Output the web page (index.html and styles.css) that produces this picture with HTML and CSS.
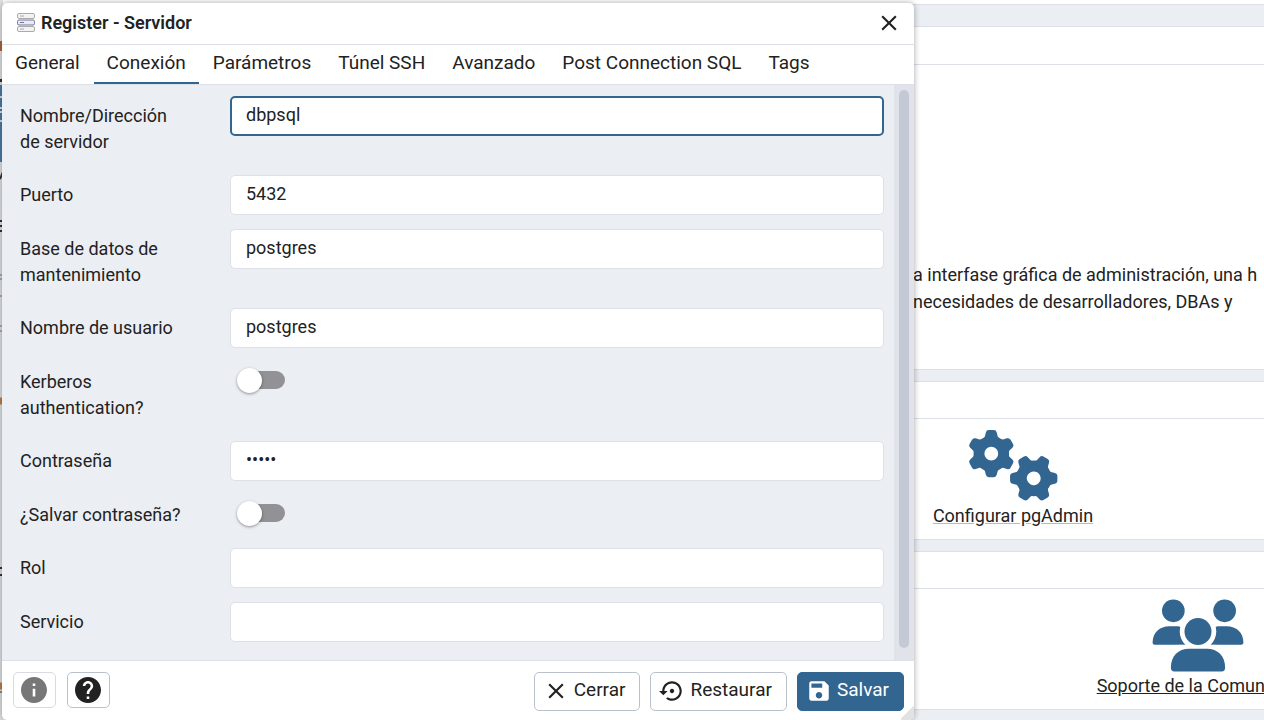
FILE: index.html
```html
<!DOCTYPE html>
<html lang="es">
<head>
<meta charset="utf-8">
<title>pgAdmin - Register Servidor</title>
<link rel="stylesheet" href="styles.css">
</head>
<body>
<main class="dashboard">
  <section class="panel panel-welcome">
    <div class="panel-head"></div>
    <div class="panel-body">
      <p class="intro">a interfase gráfica de administración, una h<br>necesidades de desarrolladores, DBAs y</p>
    </div>
  </section>
  <section class="panel">
    <div class="panel-head"></div>
    <div class="panel-body link-area link-area-config">
      <a class="quick-link quick-link-soft" href="#">
        <svg class="quick-icon" viewBox="0 0 92 74" aria-hidden="true">
          <defs>
            <path id="tooth" d="M-9.500-13-6.500-17.500-5.500-21.500Q-5-24-2.500-24H2.500Q5-24 5.500-21.500L6.500-17.500 9.500-13Z"/>
            <g id="gear">
              <circle r="12.500" fill="none" stroke="currentColor" stroke-width="11"/>
              <use href="#tooth"/><use href="#tooth" transform="rotate(60)"/><use href="#tooth" transform="rotate(120)"/>
              <use href="#tooth" transform="rotate(180)"/><use href="#tooth" transform="rotate(240)"/><use href="#tooth" transform="rotate(300)"/>
            </g>
          </defs>
          <use href="#gear" transform="translate(24 25)"/>
          <use href="#gear" transform="translate(67 50) rotate(30)"/>
        </svg>
        <span>Configurar pgAdmin</span>
      </a>
    </div>
  </section>
  <section class="panel">
    <div class="panel-head"></div>
    <div class="panel-body link-area link-area-community">
      <a class="quick-link" href="#">
        <svg class="quick-icon" viewBox="0 0 92 74" aria-hidden="true">
          <circle cx="21" cy="12" r="11.500"/><circle cx="73" cy="12" r="11.500"/>
          <path d="M0 44C0 34 7 27.500 17 27.500H26Q40 31 40 46.500H3Q0 46.500 0 44Z"/>
          <path d="M92 44C92 34 85 27.500 75 27.500H66Q52 31 52 46.500H89Q92 46.500 92 44Z"/>
          <circle cx="46" cy="33" r="18.500" fill="#fff"/>
          <rect x="27" y="46.500" width="38" height="5" fill="#fff"/>
          <circle cx="46" cy="33" r="13.700"/>
          <path d="M18.500 69.500C18.500 58 26 50.500 37 50.500H55C66 50.500 73.500 58 73.500 69.500Q73.500 73.500 70 73.500H22Q18.500 73.500 18.500 69.500Z"/>
        </svg>
        <span>Soporte de la Comunidad</span>
      </a>
    </div>
  </section>
  <svg class="edge" viewBox="0 0 3 720" aria-hidden="true">
    <rect y="0" width="3" height="720" fill="#e0e1e3"/>
    <rect y="41" width="3" height="10" fill="#a8673b"/>
    <rect y="79" width="3" height="3" fill="#333"/>
    <rect y="85" width="3" height="77" fill="#4d7ca5"/>
    <path d="M0 97h3M0 108h3M0 112h3M0 121h3" stroke="#d8dfe8" stroke-width="2"/>
    <path d="M0 179L3 172M0 221h3M0 226h3M0 231h3M0 568h3M0 575h3" stroke="#333" stroke-width="2"/>
    <path d="M0 275h3M0 279h3M0 296h3M0 326h3M0 331h3" stroke="#777"/>
    <path d="M0 401h3M0 686h3" stroke="#b88349" stroke-width="7"/>
    <path d="M0 692h3" stroke="#333"/>
  </svg>
</main>

<div class="dialog" role="dialog" aria-labelledby="dialog-title">
  <header class="dialog-head">
    <svg class="server-icon" viewBox="0 0 18 20" aria-hidden="true">
      <g fill="#f3f3f3" stroke="#aaa"><rect x=".5" y=".5" width="17" height="5" rx="1.500"/><rect x=".5" y="13.500" width="17" height="5" rx="1.500"/></g>
      <rect x=".5" y="7" width="17" height="5" rx="1.500" fill="#e9eaf3" stroke="#73779a"/>
      <path d="M3 3h4M3 16h4" stroke="#aaa"/><path d="M3 9.500h4" stroke="#73779a"/>
    </svg>
    <h1 class="dialog-title" id="dialog-title">Register - Servidor</h1>
    <button class="close" type="button" aria-label="Cerrar ventana">
      <svg class="icon" viewBox="0 0 24 24"><path d="M19 6.410 17.590 5 12 10.590 6.410 5 5 6.410 10.590 12 5 17.590 6.410 19 12 13.410 17.590 19 19 17.590 13.410 12z"/></svg>
    </button>
  </header>
  <div class="tabs" role="tablist">
    <button class="tab" role="tab" type="button">General</button>
    <button class="tab tab-active" role="tab" type="button" aria-selected="true">Conexión</button>
    <button class="tab" role="tab" type="button">Parámetros</button>
    <button class="tab" role="tab" type="button">Túnel SSH</button>
    <button class="tab" role="tab" type="button">Avanzado</button>
    <button class="tab" role="tab" type="button">Post Connection SQL</button>
    <button class="tab" role="tab" type="button">Tags</button>
  </div>
  <div class="dialog-body">
    <form class="form" id="server-form">
      <div class="row"><label class="label" for="host">Nombre/Dirección de servidor</label><input class="field field-focus" id="host" type="text" value="dbpsql"></div>
      <div class="row"><label class="label" for="port">Puerto</label><input class="field" id="port" type="text" value="5432"></div>
      <div class="row"><label class="label" for="db">Base de datos de mantenimiento</label><input class="field" id="db" type="text" value="postgres"></div>
      <div class="row"><label class="label" for="user">Nombre de usuario</label><input class="field" id="user" type="text" value="postgres"></div>
      <div class="row"><label class="label" for="kerberos">Kerberos authentication?</label><input class="switch" id="kerberos" type="checkbox" role="switch"></div>
      <div class="row"><label class="label" for="pass">Contraseña</label><input class="field" id="pass" type="password" value="admin"></div>
      <div class="row"><label class="label" for="save-pass">¿Salvar contraseña?</label><input class="switch" id="save-pass" type="checkbox" role="switch"></div>
      <div class="row"><label class="label" for="role">Rol</label><input class="field" id="role" type="text"></div>
      <div class="row"><label class="label" for="service">Servicio</label><input class="field" id="service" type="text"></div>
    </form>
    <div class="scroll-track"><div class="scroll-thumb"></div></div>
  </div>
  <footer class="dialog-foot">
    <button class="btn btn-icon" type="button" disabled aria-label="Información">
      <svg class="icon" viewBox="2 2 20 20"><path d="M12 2C6.480 2 2 6.480 2 12s4.480 10 10 10 10-4.480 10-10S17.520 2 12 2zm1 15h-2v-6h2v6zm0-8h-2V7h2v2z"/></svg>
    </button>
    <button class="btn btn-icon" type="button" aria-label="Ayuda">
      <svg class="icon" viewBox="2 2 20 20"><path d="M12 2C6.480 2 2 6.480 2 12s4.480 10 10 10 10-4.480 10-10S17.520 2 12 2zm1 17h-2v-2h2v2zm2.070-7.750-.9.920C13.450 12.900 13 13.500 13 15h-2v-.5c0-1.100.45-2.100 1.170-2.830l1.240-1.260c.37-.36.59-.86.59-1.410 0-1.100-.9-2-2-2s-2 .9-2 2H8c0-2.210 1.790-4 4-4s4 1.790 4 4c0 .88-.36 1.680-.93 2.250z"/></svg>
    </button>
    <div class="actions">
      <button class="btn btn-text" type="button">
        <svg class="icon" viewBox="0 0 24 24"><path d="M19 6.410 17.590 5 12 10.590 6.410 5 5 6.410 10.590 12 5 17.590 6.410 19 12 13.410 17.590 19 19 17.590 13.410 12z"/></svg><span class="btn-label">Cerrar</span>
      </button>
      <button class="btn btn-text" type="button">
        <svg class="icon" viewBox="0 0 24 24"><path d="M14 12c0-1.100-.9-2-2-2s-2 .9-2 2 .9 2 2 2 2-.9 2-2zm-2-9c-4.970 0-9 4.030-9 9H0l4 4 4-4H5c0-3.870 3.130-7 7-7s7 3.130 7 7-3.130 7-7 7c-1.510 0-2.910-.49-4.060-1.300l-1.420 1.440C8.040 20.300 9.940 21 12 21c4.970 0 9-4.030 9-9s-4.030-9-9-9z"/></svg><span class="btn-label">Restaurar</span>
      </button>
      <button class="btn btn-text btn-primary" type="submit" form="server-form">
        <svg class="icon" viewBox="0 0 24 24"><path d="M17 3H5c-1.110 0-2 .9-2 2v14c0 1.100.89 2 2 2h14c1.100 0 2-.9 2-2V7l-4-4zm-5 16c-1.660 0-3-1.340-3-3s1.340-3 3-3 3 1.340 3 3-1.340 3-3 3zm3-10H5V5h10v4z"/></svg><span class="btn-label">Salvar</span>
      </button>
    </div>
  </footer>
  <span class="resize-grip"></span>
</div>
</body>
</html>
```
FILE: styles.css
```css
* { box-sizing: border-box; }

:root {
  --text: #222;
  --line: #dde0e6;
  --bg: #ebeef3;
  --primary: #326690;
}

body {
  margin: 0;
  height: 100vh;
  overflow: hidden;
  position: relative;
  background: #fff;
  color: var(--text);
  font: 18px/27px Roboto, sans-serif;
}

button, input { font: inherit; color: inherit; }

/* Dashboard behind the dialog */
.dashboard {
  display: flex;
  flex-direction: column;
  gap: 11px;
  min-height: calc(100vh - 4px);
  margin-top: 4px;
  padding: 21px 0 11px;
  background: var(--bg);
  border-top: 1px solid var(--line);
  overflow: hidden;
}

.panel {
  background: #fff;
  border: 1px solid var(--line);
  border-width: 1px 0;
}

.panel-head { height: 37px; border-bottom: 1px solid var(--line); }

.panel-body { min-height: 120px; }

.panel-welcome .panel-head { height: 38px; }
.panel-welcome .panel-body { min-height: 304px; padding-top: 196px; }
.intro { margin: 0 0 0 913px; white-space: nowrap; }

.link-area { display: flex; padding-top: 10px; }
.link-area-config { padding-left: 903px; }
.link-area-community { padding-left: 1088px; }

.quick-link {
  flex: none;
  min-width: 220px;
  display: flex;
  flex-direction: column;
  align-items: center;
  color: var(--text);
  white-space: nowrap;
}

.quick-link-soft { text-decoration-color: #a9bfd0; }
.quick-icon { width: 92px; height: 73px; fill: var(--primary); color: var(--primary); }

.edge { position: absolute; left: 0; top: 0; width: 3px; height: 720px; }

/* Dialog */
.dialog {
  position: absolute;
  inset: 3px 350px 0 2px;
  display: flex;
  flex-direction: column;
  background: #fff;
  border-radius: 5px;
  box-shadow: 0 0 6px rgba(0, 0, 0, .35);
  overflow: hidden;
}

.dialog-head {
  display: flex;
  align-items: center;
  gap: 6px;
  height: 42px;
  padding: 0 12px 2px 15px;
  border-bottom: 1px solid var(--line);
}

.server-icon { width: 18px; height: 20px; }
.dialog-title { flex: 1; margin: 0; font-size: 18px; font-weight: 600; }
.close { display: flex; padding: 0; border: 0; background: none; }
.icon { width: 26px; height: 26px; fill: currentColor; flex: none; }

.tabs {
  display: flex;
  gap: 1px;
  height: 40px;
  border-bottom: 1px solid var(--line);
}

.tab {
  padding: 0 13px 2px;
  border: 0;
  border-bottom: 2px solid transparent;
  background: none;
  font-size: 19px;
  white-space: nowrap;
}

.tab-active { border-bottom-color: var(--primary); }

.dialog-body { flex: 1; display: flex; min-height: 0; background: var(--bg); }

.form {
  flex: 1;
  display: flex;
  flex-direction: column;
  gap: 14px;
  padding: 11px 10px 16px 18px;
}

.row { display: grid; grid-template-columns: 210px 1fr; align-items: start; }
.label { padding: 7px 44px 6px 0; line-height: 26px; }

.field {
  width: 100%;
  height: 40px;
  padding: 0 15px 3px;
  border: 1px solid var(--line);
  border-radius: 5px;
  background: #fff;
  outline: none;
}

.field-focus { border: 2px solid var(--primary); padding: 0 14px 3px; }

.switch {
  appearance: none;
  display: flex;
  align-items: center;
  width: 45px;
  height: 18px;
  margin: 9px 10px;
  border-radius: 9px;
  background: #929296;
}

.switch::before {
  content: "";
  flex: none;
  width: 25px;
  height: 25px;
  margin-left: -3px;
  border-radius: 50%;
  background: #fff;
  box-shadow: 0 1px 3px rgba(0, 0, 0, .4);
}

.scroll-track { width: 20px; padding: 5px 5px 12px; background: #e0e3ea; }
.scroll-thumb { height: 100%; border-radius: 5px; background: #c4cad5; }

.dialog-foot {
  display: flex;
  align-items: flex-start;
  gap: 11px;
  height: 60px;
  padding: 11px 10px 0 11px;
  border-top: 1px solid var(--line);
}

.actions { display: flex; gap: 10px; margin-left: auto; }

.btn {
  display: flex;
  align-items: center;
  justify-content: center;
  height: 39px;
  border: 1px solid #bac1cd;
  border-radius: 5px;
  background: #fff;
  font-size: 19px;
}

.btn-text { gap: 5px; padding: 0 14px 2px 8px; }
.btn-label { padding-bottom: 2px; }
.btn-icon { width: 43px; height: 36px; padding: 0 1px 1px 0; }
.btn-icon:disabled { color: #777; border-color: #d8dbe2; }
.btn-primary { color: #fff; background: var(--primary); border-color: var(--primary); }

.resize-grip {
  position: absolute;
  right: 0;
  bottom: 0;
  width: 14px;
  height: 14px;
  background: linear-gradient(135deg, transparent 50%, #e2e2e2 50%);
}
```
